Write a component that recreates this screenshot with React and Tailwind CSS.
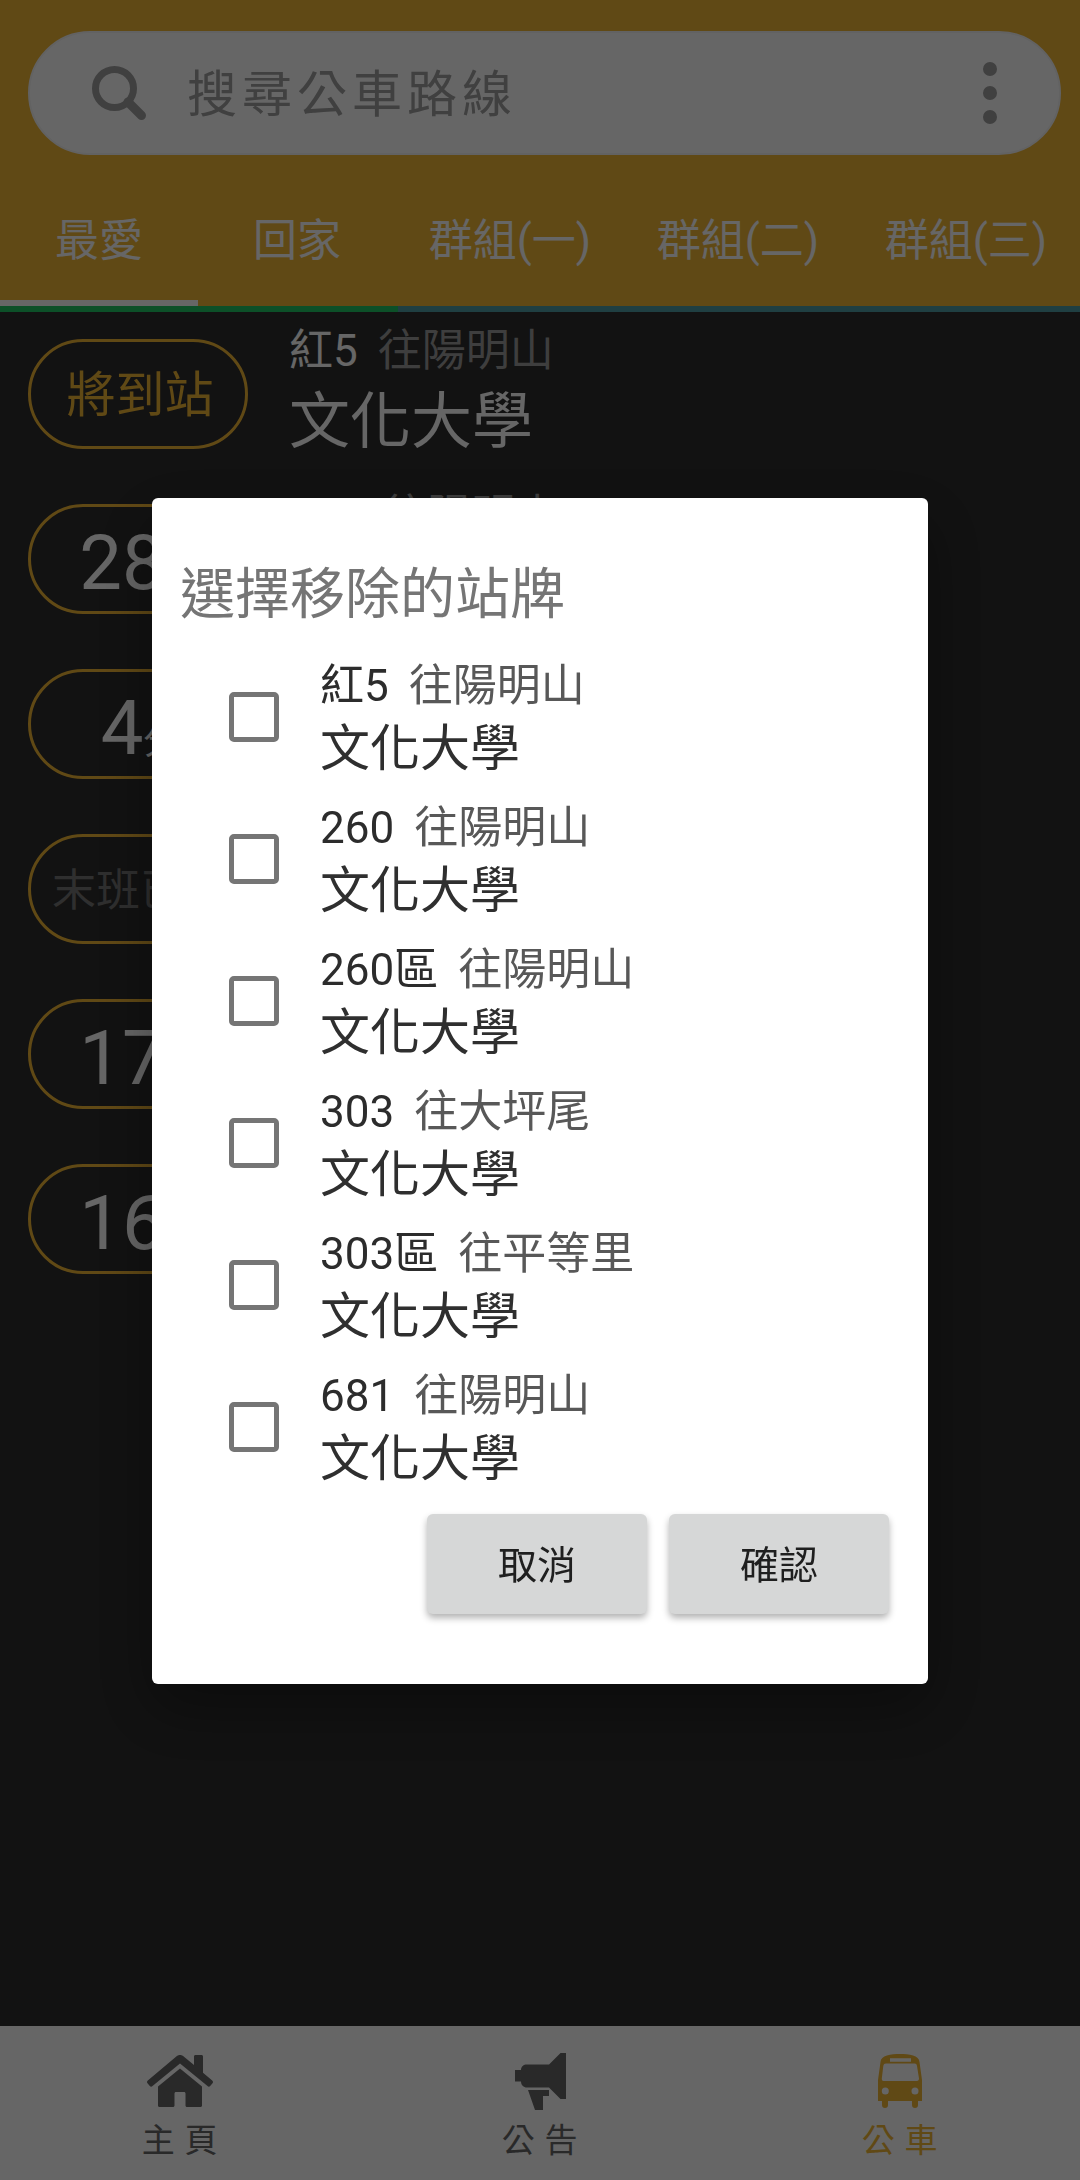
import React from "react";

const tabs = [
  { name: "最愛", active: true, wide: false },
  { name: "回家", active: false, wide: false },
  { name: "群組(一)", active: false, wide: true },
  { name: "群組(二)", active: false, wide: true },
  { name: "群組(三)", active: false, wide: true },
];

const stops = [
  { route: "紅5", dest: "往陽明山", stop: "文化大學", status: "將到站", kind: "soon" },
  { route: "260", dest: "往陽明山", stop: "文化大學", status: "28", kind: "minutes" },
  { route: "260區", dest: "往陽明山", stop: "文化大學", status: "4", kind: "minutes" },
  { route: "303", dest: "往大坪尾", stop: "文化大學", status: "末班已過", kind: "ended" },
  { route: "303區", dest: "往平等里", stop: "文化大學", status: "17", kind: "minutes" },
  { route: "681", dest: "往陽明山", stop: "文化大學", status: "16", kind: "minutes" },
];

function SearchIcon() {
  return (
    <svg viewBox="0 0 54 54" className="h-[54px] w-[54px] shrink-0 text-[#a0a0a0]" fill="none" stroke="currentColor" aria-hidden="true">
      <circle cx="22.5" cy="22.5" r="19" strokeWidth="7" />
      <path d="M36 36 49.500 49.500" strokeWidth="9" strokeLinecap="round" />
    </svg>
  );
}

function HomeIcon() {
  return (
    <svg viewBox="0 0 66 52" className="h-[52px] w-[66px]" fill="currentColor" aria-hidden="true">
      <path d="M33 0C31.500 0 30.500.5 29.300 1.500L.8 25.500C-.2 26.400-.2 27.400.5 28.300L2.800 31C3.500 31.800 4.600 31.900 5.500 31.100L33 8.500 60.500 31.100C61.400 31.900 62.500 31.800 63.200 31L65.500 28.300C66.200 27.400 66.200 26.400 65.200 25.500L56 17.700V1.500C56 .6 55.400 0 54.500 0H48.500C47.600 0 47 .6 47 1.500V10L36.700 1.500C35.500.5 34.500 0 33 0Z" />
      <path d="M33 13.500 11 31.500V50.500C11 51.400 11.600 52 12.500 52H26C26.900 52 27.500 51.400 27.500 50.500V38.500C27.500 37.600 28.100 37 29 37H37C37.900 37 38.500 37.600 38.500 38.500V50.500C38.500 51.400 39.100 52 40 52H53.500C54.400 52 55 51.400 55 50.500V31.500Z" />
    </svg>
  );
}

function MegaphoneIcon() {
  return (
    <svg viewBox="0 0 51 57" className="h-[57px] w-[51px]" fill="currentColor" aria-hidden="true">
      <path d="M45.500 0H51V46H45.500L34 34.500H12C8.500 34.500 6 32 6 28.500H0V17H6C6 13.500 8.500 11.500 12 11.500H34Z" />
      <path d="M13 37H34V43H28V57H20Z" />
    </svg>
  );
}

function BusIcon() {
  return (
    <svg viewBox="0 0 44 54" className="h-[54px] w-[44px]" fill="currentColor" fillRule="evenodd" aria-hidden="true">
      <path d="M22 0C13 0 2.700 1.500 2.500 8L0 26V47H4V51A3 3 0 0 0 10 51V47H34V51A3 3 0 0 0 40 51V47H44V26L41.500 8C41.300 1.500 31 0 22 0ZM12 4.300H33V7.700H12ZM8 9.500H36.500C38 9.500 38.800 10.300 39 12L41 24.500C41 26 40.300 27 39 27H5.500C4.200 27 3.700 26 3.800 24.500L5.300 12C5.500 10.300 6.500 9.500 8 9.500ZM7.300 33.500A3.500 3.500 0 1 1 7.300 40.500 3.500 3.500 0 1 1 7.300 33.500ZM37 33.500A3.500 3.500 0 1 1 37 40.500 3.500 3.500 0 1 1 37 33.500Z" />
    </svg>
  );
}

function StatusPill({ status, kind }) {
  return (
    <div className="flex h-[110px] w-[220px] shrink-0 items-center justify-center rounded-full border-[3px] border-[#f1b636] pt-1 pl-1 whitespace-nowrap">
      {kind === "soon" && <span className="text-[49px] text-[#f1b636]">{status}</span>}
      {kind === "ended" && <span className="text-[44px] text-[#757575]">{status}</span>}
      {kind === "minutes" && (
        <span className="pt-1 text-[76px] text-white">
          {status}
          <span className="text-[36px]">分</span>
        </span>
      )}
    </div>
  );
}

function ArrivalRow({ item }) {
  return (
    <li className="flex h-[165px] items-center gap-[41px] px-7 pb-px">
      <StatusPill status={item.status} kind={item.kind} />
      <div className="pb-1">
        <p className="flex gap-5 text-[44px] leading-[60px]">
          <span className="text-white">{item.route}</span>
          <span className="text-[#9c9c9c]">{item.dest}</span>
        </p>
        <p className="text-[61px] leading-[82px] text-white">{item.stop}</p>
      </div>
    </li>
  );
}

function NavItem({ icon, label, active }) {
  return (
    <a
      href="#"
      className={
        "flex flex-1 flex-col items-center " + (active ? "text-[#f1b636]" : "text-[#686868]")
      }
    >
      <span className="flex h-[62px] items-center">{icon}</span>
      <span className="text-[33px] leading-[58px] tracking-wide">{label}</span>
    </a>
  );
}

function RemoveDialog() {
  return (
    <div
      role="dialog"
      aria-modal="true"
      aria-labelledby="remove-title"
      className="w-full max-w-[776px] rounded-md bg-white pt-[66px] pb-[70px] shadow-[0_24px_60px_rgba(0,0,0,0.35)]"
    >
      <h2 id="remove-title" className="px-7 text-[55px] leading-[60px] text-[#757575]">
        選擇移除的站牌
      </h2>
      <ul className="pt-[22px]">
        {stops.map((item) => (
          <li key={item.route}>
            <label className="flex h-[142px] items-center gap-[41px] pl-[77px]">
              <input
                type="checkbox"
                className="h-[50px] w-[50px] shrink-0 appearance-none rounded-[5px] border-[5px] border-[#757575] checked:bg-[#757575]"
              />
              <span className="flex flex-col pt-0.5">
                <span className="flex gap-5 text-[44px] leading-[62px]">
                  <span className="text-[#2c2c2c]">{item.route}</span>
                  <span className="text-[#585858]">{item.dest}</span>
                </span>
                <span className="text-[50px] leading-[64px] text-[#2f2f2f]">{item.stop}</span>
              </span>
            </label>
          </li>
        ))}
      </ul>
      <div className="flex justify-end gap-[22px] pt-4 pr-[39px]">
        <button type="button" className="h-[100px] w-[220px] rounded-md bg-[#d6d7d7] pt-1 text-[39px] text-[#1f1f1f] shadow-[0_4px_7px_rgba(0,0,0,0.3)]">
          取消
        </button>
        <button type="button" className="h-[100px] w-[220px] rounded-md bg-[#d6d7d7] pt-1 text-[39px] text-[#1f1f1f] shadow-[0_4px_7px_rgba(0,0,0,0.3)]">
          確認
        </button>
      </div>
    </div>
  );
}

export default function App() {
  return (
    <div className="flex min-h-screen flex-col bg-[#2d2d2d] font-[Roboto,'Noto_Sans_CJK_TC',sans-serif]">
      <header className="bg-[#f1b636] pt-[31px]">
        <div className="mr-[19px] ml-7 flex h-[124px] items-center rounded-full border-2 border-[#f4f4f4] bg-white pr-[62px] pl-[62px]">
          <SearchIcon />
          <input
            type="text"
            aria-label="搜尋公車路線"
            placeholder="搜尋公車路線"
            className="ml-[41px] min-w-0 flex-1 bg-transparent pt-1 text-[50px] tracking-widest outline-none placeholder:text-[#a0a0a0]"
          />
          <button type="button" aria-label="選單" className="flex flex-col items-center gap-[10px]">
            <span className="h-[14px] w-[14px] rounded-full bg-[#a0a0a0]" />
            <span className="h-[14px] w-[14px] rounded-full bg-[#a0a0a0]" />
            <span className="h-[14px] w-[14px] rounded-full bg-[#a0a0a0]" />
          </button>
        </div>
        <nav className="flex pt-[19px]" aria-label="群組">
          {tabs.map((tab) => (
            <button
              key={tab.name}
              type="button"
              className={
                "h-[132px] border-b-[6px] pt-2 text-[44px] whitespace-nowrap text-white " +
                (tab.wide ? "grow basis-[228px] " : "grow basis-[198px] ") +
                (tab.active ? "border-white" : "border-transparent")
              }
            >
              {tab.name}
            </button>
          ))}
        </nav>
      </header>
      <div className="flex h-[6px] bg-[#4e9ea5]">
        <div className="w-[398px] bg-[#1ec864]" />
      </div>
      <main className="grow">
        <ul>
          {stops.map((item) => (
            <ArrivalRow key={item.route} item={item} />
          ))}
        </ul>
      </main>
      <nav className="flex h-[154px] bg-white pt-6" aria-label="主選單">
        <NavItem icon={<HomeIcon />} label="主 頁" />
        <NavItem icon={<MegaphoneIcon />} label="公 告" />
        <NavItem icon={<BusIcon />} label="公 車" active />
      </nav>
      <div className="fixed inset-0 flex items-center justify-center bg-black/60 pt-0.5">
        <RemoveDialog />
      </div>
    </div>
  );
}
